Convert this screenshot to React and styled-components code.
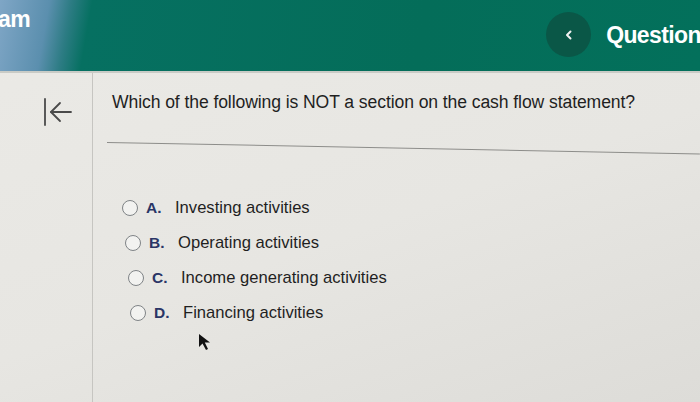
import React from "react";
import styled, { createGlobalStyle } from "styled-components";

const GlobalStyle = createGlobalStyle`
  html, body {
    margin: 0;
    padding: 0;
    width: 700px;
    height: 402px;
    overflow: hidden;
    background: #e4e3df;
    font-family: "Liberation Sans", Arial, sans-serif;
  }
`;

const Screen = styled.div`
  width: 700px;
  height: 402px;
  display: flex;
  flex-direction: column;
  position: relative;
  overflow: hidden;
  background: linear-gradient(160deg, #ebeae6 0%, #e7e6e2 55%, #dddcd8 100%);
`;

const Header = styled.header`
  height: 71px;
  flex-shrink: 0;
  display: flex;
  align-items: center;
  background: linear-gradient(
    100deg,
    #7fa6c6 0%,
    #5b8fae 7%,
    #2d7c84 10%,
    #067061 13%,
    #046d59 60%,
    #03705b 100%
  );
  border-bottom: 2px solid #c9cbc6;
  overflow: hidden;
`;

const CourseName = styled.span`
  color: #ffffff;
  font-size: 23px;
  font-weight: 700;
  margin-left: -2px;
  margin-top: -32px;
  letter-spacing: -0.5px;
`;

const Nav = styled.div`
  margin-left: auto;
  margin-right: -1px;
  display: flex;
  align-items: center;
  gap: 15px;
`;

const BackButton = styled.button`
  width: 45px;
  height: 45px;
  border-radius: 50%;
  border: none;
  background: #0a5747;
  color: #f2f2f2;
  display: flex;
  align-items: center;
  justify-content: center;
  padding: 0;
  margin-bottom: 2px;
`;

const Title = styled.h1`
  margin: 0;
  color: #ffffff;
  font-size: 23px;
  font-weight: 700;
  letter-spacing: -0.6px;
  white-space: nowrap;
`;

const Body = styled.div`
  flex: 1;
  display: flex;
`;

const Sidebar = styled.aside`
  width: 93px;
  flex-shrink: 0;
  border-right: 1px solid #c6c5c1;
  display: flex;
  justify-content: center;
  padding-top: 24px;
  padding-left: 24px;
  box-sizing: border-box;
`;

const Main = styled.main`
  flex: 1;
  padding: 19px 0 0 18px;
`;

const Prompt = styled.p`
  margin: 0 0 0 1px;
  font-size: 17.6px;
  color: #1f1f1f;
  letter-spacing: -0.1px;
`;

const Rule = styled.hr`
  margin: 29px 0 0 -4px;
  border: none;
  border-top: 1px solid #8d8d8a;
  transform: rotate(1.1deg);
  transform-origin: left;
`;

const Options = styled.ul`
  list-style: none;
  margin: 54px 0 0 11px;
  padding: 0;
  display: flex;
  flex-direction: column;
  gap: 14px;
`;

const Option = styled.li`
  display: flex;
  align-items: center;
  height: 21px;
  margin-left: ${(p) => p.$shift}px;
`;

const Radio = styled.span`
  width: 14px;
  height: 14px;
  border-radius: 50%;
  border: 1.6px solid #7f8386;
  background: #f2f2f0;
  flex-shrink: 0;
`;

const Letter = styled.span`
  width: 29px;
  margin-left: 8px;
  font-size: 15.5px;
  font-weight: 700;
  color: #2a3566;
`;

const Answer = styled.span`
  font-size: 16.6px;
  color: #1f1f1f;
`;

const Cursor = styled.svg`
  position: absolute;
  left: 198px;
  top: 333px;
`;

const options = [
  { letter: "A.", text: "Investing activities", shift: 0 },
  { letter: "B.", text: "Operating activities", shift: 3 },
  { letter: "C.", text: "Income generating activities", shift: 6 },
  { letter: "D.", text: "Financing activities", shift: 8 },
];

const App = () => {
  return (
    <Screen>
      <GlobalStyle />
      <Header>
        <CourseName>am</CourseName>
        <Nav>
          <BackButton aria-label="Previous question">
            <svg width="12" height="12" viewBox="0 0 12 12">
              <path
                d="M7.5 2.5 L4 6 L7.5 9.5"
                fill="none"
                stroke="currentColor"
                strokeWidth="2"
                strokeLinecap="round"
                strokeLinejoin="round"
              />
            </svg>
          </BackButton>
          <Title>Question</Title>
        </Nav>
      </Header>
      <Body>
        <Sidebar>
          <svg width="30" height="30" viewBox="0 0 30 30">
            <g
              fill="none"
              stroke="#4a4a4a"
              strokeWidth="1.8"
              strokeLinecap="round"
              strokeLinejoin="round"
            >
              <path d="M2 2 V28" />
              <path d="M28 15 H8" />
              <path d="M17 6 L8 15 L17 24" />
            </g>
          </svg>
        </Sidebar>
        <Main>
          <Prompt>
            Which of the following is NOT a section on the cash flow statement?
          </Prompt>
          <Rule />
          <Options>
            {options.map((o) => (
              <Option key={o.letter} $shift={o.shift}>
                <Radio />
                <Letter>{o.letter}</Letter>
                <Answer>{o.text}</Answer>
              </Option>
            ))}
          </Options>
        </Main>
      </Body>
      <Cursor width="14" height="18" viewBox="0 0 14 18">
        <path d="M1 1 L1 14 L4.5 10.5 L8 17 L10 16 L6.8 9.6 L12 9.6 Z" fill="#111" />
      </Cursor>
    </Screen>
  );
};

export default App;
